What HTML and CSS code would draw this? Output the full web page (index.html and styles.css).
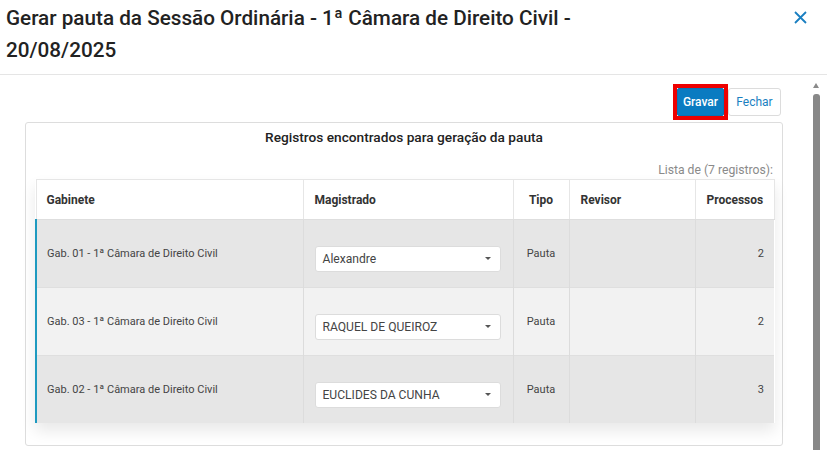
FILE: index.html
```html
<!DOCTYPE html>
<html lang="pt-BR">
<head>
<meta charset="utf-8">
<title>Gerar pauta</title>
<link rel="stylesheet" href="styles.css">
</head>
<body>
<div class="modal">
  <div class="modal-header">
    <h1 class="modal-title">Gerar pauta da Sessão Ordinária - 1ª Câmara de Direito Civil - 20/08/2025</h1>
    <button class="close" aria-label="Fechar">
      <svg width="13" height="13" viewBox="0 0 13 13"><path d="M1 1 L12 12 M12 1 L1 12" stroke="#1a7fc1" stroke-width="1.8" fill="none"/></svg>
    </button>
  </div>
  <div class="modal-body">
    <div class="content">
      <div class="actions">
        <span class="highlight"><button class="btn btn-primary">Gravar</button></span>
        <button class="btn btn-default">Fechar</button>
      </div>
      <div class="card">
        <div class="card-title">Registros encontrados para geração da pauta</div>
        <div class="count">Lista de (7 registros):</div>
        <table class="grid">
          <colgroup>
            <col class="c-gab"><col class="c-mag"><col class="c-tipo"><col class="c-rev"><col class="c-proc">
          </colgroup>
          <thead>
            <tr>
              <th>Gabinete</th>
              <th>Magistrado</th>
              <th class="center">Tipo</th>
              <th>Revisor</th>
              <th class="right">Processos</th>
            </tr>
          </thead>
          <tbody>
            <tr class="dark">
              <td>Gab. 01 - 1ª Câmara de Direito Civil</td>
              <td><div class="select"><span>Alexandre</span><i class="caret"></i></div></td>
              <td class="center">Pauta</td>
              <td></td>
              <td class="right">2</td>
            </tr>
            <tr class="light">
              <td>Gab. 03 - 1ª Câmara de Direito Civil</td>
              <td><div class="select"><span>RAQUEL DE QUEIROZ</span><i class="caret"></i></div></td>
              <td class="center">Pauta</td>
              <td></td>
              <td class="right">2</td>
            </tr>
            <tr class="dark">
              <td>Gab. 02 - 1ª Câmara de Direito Civil</td>
              <td><div class="select"><span>EUCLIDES DA CUNHA</span><i class="caret"></i></div></td>
              <td class="center">Pauta</td>
              <td></td>
              <td class="right">3</td>
            </tr>
          </tbody>
        </table>
      </div>
    </div>
    <div class="scrollbar" aria-hidden="true">
      <i class="scroll-up"></i>
      <div class="scroll-thumb"></div>
    </div>
  </div>
</div>
</body>
</html>
```
FILE: styles.css
```css
html, body {
  margin: 0;
  padding: 0;
  overflow: hidden;
  background: #fff;
  font-family: Roboto, "Liberation Sans", sans-serif;
  color: #333;
}

.modal {
  width: 827px;
}

.modal-header {
  display: flex;
  align-items: flex-start;
  justify-content: space-between;
  padding: 2px 20px 8px 6px;
  border-bottom: 1px solid #e5e5e5;
  height: 64px;
}

.modal-title {
  margin: 0;
  font-size: 20.7px;
  line-height: 32px;
  font-weight: 500;
  color: #222;
  max-width: 640px;
}

.close {
  border: 0;
  background: transparent;
  padding: 0;
  margin-top: 9px;
  width: 13px;
  height: 13px;
  cursor: pointer;
}

.close svg {
  display: block;
}

.modal-body {
  display: flex;
  margin-top: 5px;
  width: 823px;
  height: 400px;
}

.content {
  width: 811px;
  padding: 4px 28px 0 25px;
  box-sizing: border-box;
}

.scrollbar {
  width: 12px;
  display: flex;
  flex-direction: column;
  align-items: center;
  padding-top: 3px;
}

.scroll-up {
  display: block;
  width: 0;
  height: 0;
  border-left: 3.5px solid transparent;
  border-right: 3.5px solid transparent;
  border-bottom: 5px solid #8a8a8a;
  margin-left: -2px;
}

.scroll-thumb {
  width: 7px;
  margin-left: -2px;
  margin-top: 6px;
  flex: 1;
  background: #888;
  border-radius: 3px 3px 0 0;
}

.actions {
  display: flex;
  justify-content: flex-end;
  align-items: flex-start;
  margin-right: 2px;
  height: 36px;
  margin-bottom: 2px;
}

.highlight {
  display: inline-block;
  border: 4px solid #ee0000;
  line-height: 0;
}

.btn {
  font-family: Roboto, "Liberation Sans", sans-serif;
  font-size: 12px;
  height: 28px;
  padding: 0;
  border-radius: 2px;
  cursor: pointer;
}

.btn-primary {
  width: 47px;
  background: #0a7bc1;
  color: #fff;
  border: 1px solid #0a72b4;
  font-weight: 500;
}

.btn-default {
  margin-top: 4px;
  width: 53px;
  background: #fff;
  color: #1a7fc1;
  border: 1px solid #dcdcdc;
  border-radius: 3px;
}

.card {
  border: 1px solid #dddddd;
  border-radius: 3px;
  padding: 6px 9px 21px 9px;
  height: 324px;
  box-sizing: border-box;
}

.card-title {
  text-align: center;
  font-size: 13.7px;
  font-weight: 500;
  line-height: 16px;
  color: #222;
  margin-bottom: 17px;
}

.count {
  text-align: right;
  font-size: 12.2px;
  line-height: 16px;
  color: #8a8a8a;
  margin-bottom: 1px;
}

.grid {
  width: 738px;
  border-collapse: collapse;
  table-layout: fixed;
  box-shadow: 0 8px 14px rgba(0, 0, 0, 0.09);
}

.c-gab { width: 267px; }
.c-mag { width: 210px; }
.c-tipo { width: 56px; }
.c-rev { width: 126px; }
.c-proc { width: 79px; }

.grid th {
  height: 39px;
  padding: 0 11px;
  font-size: 12px;
  font-weight: 700;
  color: #333;
  text-align: left;
  background: #fff;
  border: 1px solid #e6e6e6;
  border-bottom: 1px solid #dedede;
}

.grid td {
  height: 67px;
  padding: 0 10px 0 11px;
  font-size: 11px;
  color: #444;
  vertical-align: middle;
  border-left: 1px solid #dcdcdc;
  border-top: 1px solid #dfdfdf;
}

.grid th:first-child,
.grid td:first-child {
  padding-left: 10px;
}

.grid td:first-child {
  border-left: 2px solid #1e9ac0;
}

.grid tr.dark td {
  background: #e6e6e6;
}

.grid tr.light td {
  background: #f2f2f2;
}

.grid .center {
  text-align: center;
  padding: 0;
}

.grid .right {
  text-align: right;
}

.select {
  display: flex;
  align-items: center;
  justify-content: space-between;
  height: 26px;
  box-sizing: border-box;
  margin-top: 10px;
  margin-right: 2px;
  padding: 0 9px 0 7px;
  background: #fff;
  border: 1px solid #dcdcdc;
  border-radius: 3px;
  font-size: 12.1px;
  color: #444;
}

.caret {
  width: 0;
  height: 0;
  border-left: 3px solid transparent;
  border-right: 3px solid transparent;
  border-top: 3px solid #555;
}
```
